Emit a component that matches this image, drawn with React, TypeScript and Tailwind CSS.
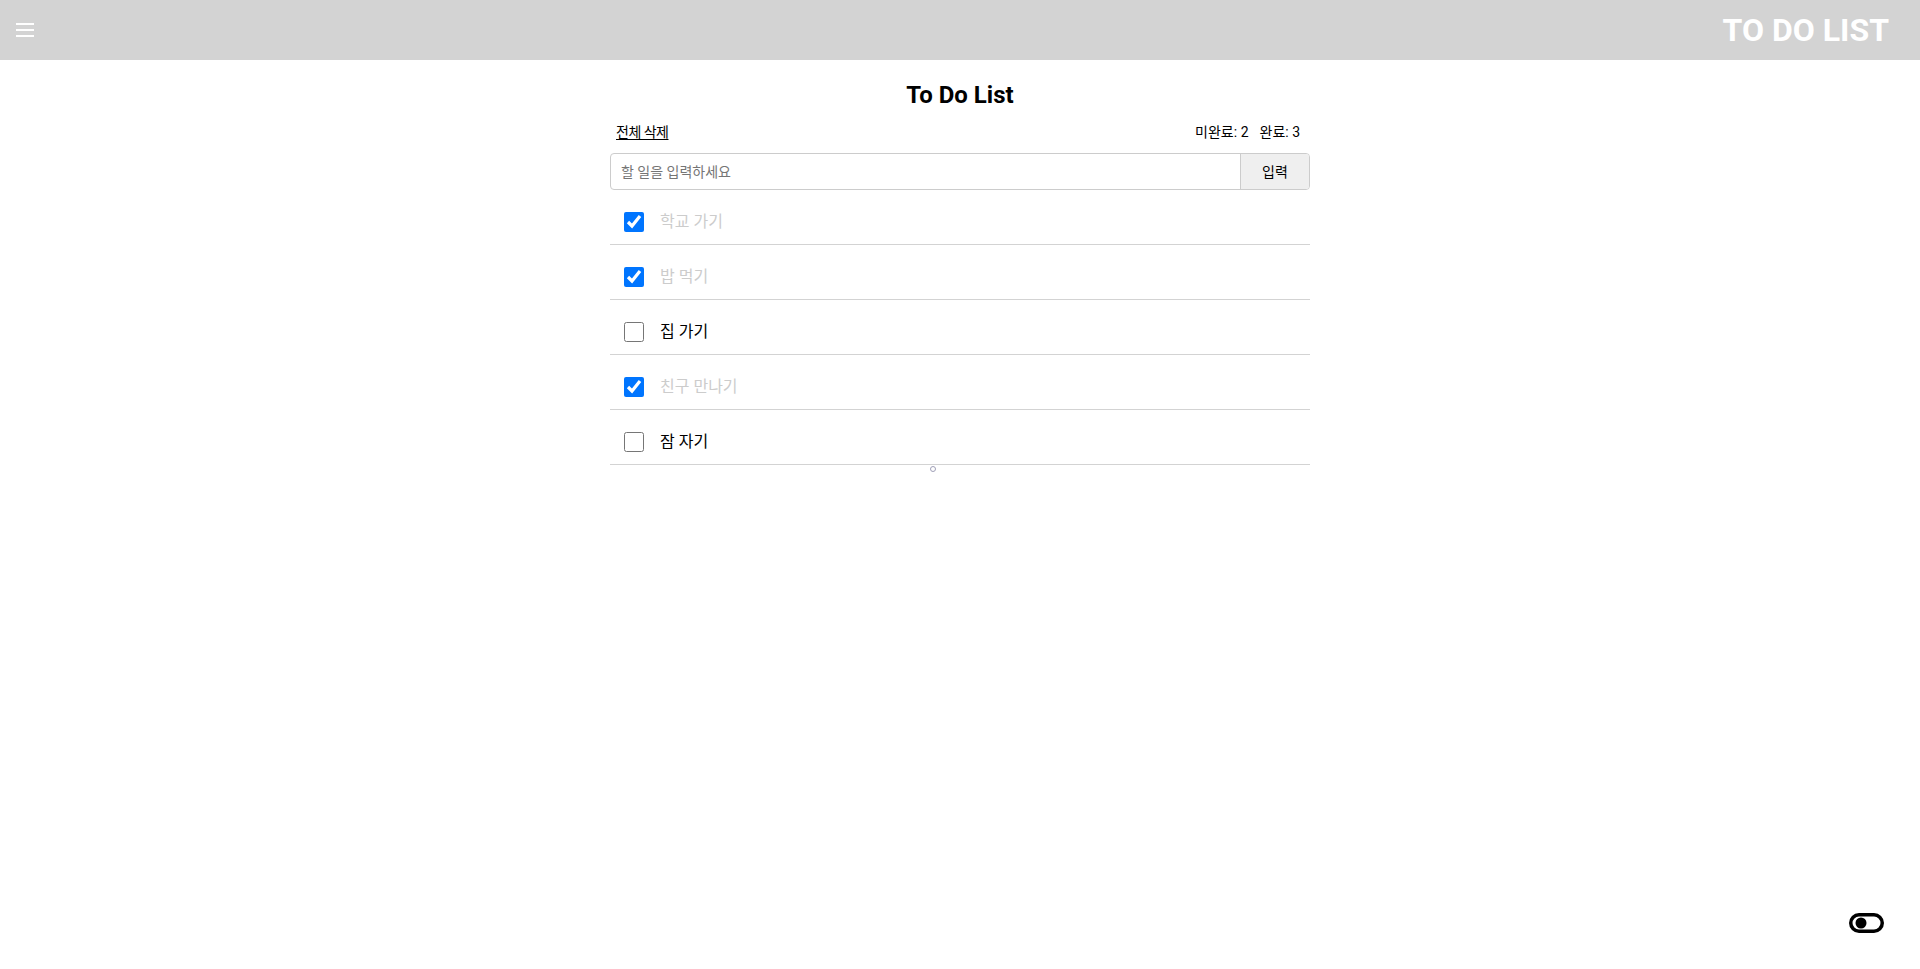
import { useState } from "react";

type Todo = { id: number; text: string; done: boolean };

const initialTodos: Todo[] = [
  { id: 1, text: "학교 가기", done: true },
  { id: 2, text: "밥 먹기", done: true },
  { id: 3, text: "집 가기", done: false },
  { id: 4, text: "친구 만나기", done: true },
  { id: 5, text: "잠 자기", done: false },
];

function ToggleIcon() {
  return (
    <svg width="35" height="20" viewBox="0 0 35 20" fill="none">
      <rect x="1.75" y="1.75" width="31.5" height="16.5" rx="8.25" stroke="black" strokeWidth="3.5" />
      <circle cx="12" cy="10" r="5.5" fill="black" />
    </svg>
  );
}

export default function App() {
  const [todos, setTodos] = useState<Todo[]>(initialTodos);
  const [text, setText] = useState("");

  const doneCount = todos.filter((t) => t.done).length;
  const leftCount = todos.length - doneCount;

  const toggle = (id: number) =>
    setTodos((prev) => prev.map((t) => (t.id === id ? { ...t, done: !t.done } : t)));

  const add = () => {
    if (!text.trim()) return;
    setTodos((prev) => [...prev, { id: Date.now(), text, done: false }]);
    setText("");
  };

  return (
    <div className="min-h-screen bg-white text-black font-['Roboto','Noto_Sans_CJK_KR',sans-serif]">
      <header className="h-[60px] bg-[#d3d3d3] flex items-center justify-between pl-4 pr-[31px]">
        <button className="flex flex-col gap-[3.5px] w-[18px]">
          <span className="block h-[2.5px] w-full bg-white" />
          <span className="block h-[2.5px] w-full bg-white" />
          <span className="block h-[2.5px] w-full bg-white" />
        </button>
        <h1 className="text-[32px] leading-[60px] font-bold text-white">TO DO LIST</h1>
      </header>

      <main className="w-[700px] mx-auto">
        <h2 className="mt-[17px] text-2xl leading-[36px] font-bold text-center">To Do List</h2>

        <div className="mt-[9px] flex justify-between items-center text-sm leading-5 pl-[6px] pr-[10px]">
          <button className="underline underline-offset-2 tracking-[-0.5px]" onClick={() => setTodos([])}>
            전체 삭제
          </button>
          <div>
            <span>미완료: {leftCount}</span>
            <span className="ml-[11px]">완료: {doneCount}</span>
          </div>
        </div>

        <div className="mt-[11px] flex h-[37px] border border-[#cccccc] rounded-[4px] overflow-hidden">
          <input
            className="flex-1 px-[10px] text-sm outline-none placeholder:text-[#757575]"
            placeholder="할 일을 입력하세요"
            value={text}
            onChange={(e) => setText(e.target.value)}
          />
          <button className="w-[69px] bg-[#efefef] border-l border-[#cccccc] text-sm" onClick={add}>
            입력
          </button>
        </div>

        <ul>
          {todos.map((t) => (
            <li
              key={t.id}
              className="flex items-center gap-4 pl-[14px] pt-[22px] pb-[12px] border-b border-[#d3d3d3]"
            >
              <input
                type="checkbox"
                className="w-5 h-5 m-0"
                checked={t.done}
                onChange={() => toggle(t.id)}
              />
              <span
                className={
                  t.done
                    ? "text-base leading-5 text-[#cccccc]"
                    : "text-base leading-5 text-black"
                }
              >
                {t.text}
              </span>
            </li>
          ))}
        </ul>
        <div className="mt-[1px] pl-[320px]">
          <span className="block w-[6px] h-[6px] rounded-full border border-[#a0a0b8]" />
        </div>
      </main>

      <button className="fixed right-[36px] bottom-[36px]">
        <ToggleIcon />
      </button>
    </div>
  );
}
